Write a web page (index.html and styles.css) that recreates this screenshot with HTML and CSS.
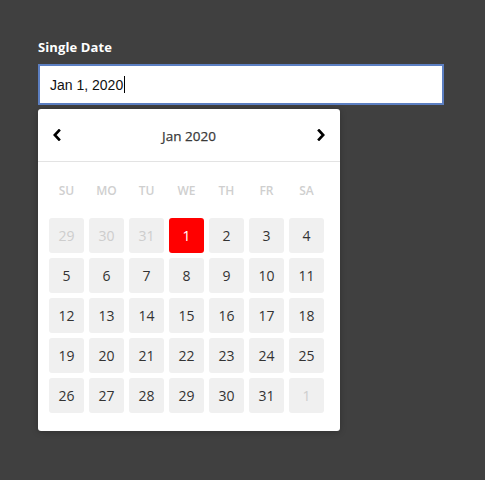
FILE: index.html
```html
<!DOCTYPE html>
<html>
<head>
<meta charset="utf-8">
<link rel="stylesheet" href="styles.css">
</head>
<body>
<div class="wrap">
  <div class="label">Single Date</div>
  <div class="input"><span class="val">Jan 1, 2020</span><span class="caret"></span></div>
  <div class="cal">
    <div class="head">
      <span class="nav">
        <svg width="10" height="12" viewBox="0 0 10 12"><path d="M7 1.5 L2.8 6 L7 10.5" fill="none" stroke="#000" stroke-width="2.6" stroke-linecap="square" stroke-linejoin="miter"/></svg>
      </span>
      <span class="title">Jan 2020</span>
      <span class="nav">
        <svg width="10" height="12" viewBox="0 0 10 12"><path d="M3 1.5 L7.2 6 L3 10.5" fill="none" stroke="#000" stroke-width="2.6" stroke-linecap="square" stroke-linejoin="miter"/></svg>
      </span>
    </div>
    <div class="grid">
      <div class="wd">SU</div><div class="wd">MO</div><div class="wd">TU</div><div class="wd">WE</div><div class="wd">TH</div><div class="wd">FR</div><div class="wd">SA</div>
      <div class="d off">29</div><div class="d off">30</div><div class="d off">31</div><div class="d sel">1</div><div class="d">2</div><div class="d">3</div><div class="d">4</div>
      <div class="d">5</div><div class="d">6</div><div class="d">7</div><div class="d">8</div><div class="d">9</div><div class="d">10</div><div class="d">11</div>
      <div class="d">12</div><div class="d">13</div><div class="d">14</div><div class="d">15</div><div class="d">16</div><div class="d">17</div><div class="d">18</div>
      <div class="d">19</div><div class="d">20</div><div class="d">21</div><div class="d">22</div><div class="d">23</div><div class="d">24</div><div class="d">25</div>
      <div class="d">26</div><div class="d">27</div><div class="d">28</div><div class="d">29</div><div class="d">30</div><div class="d">31</div><div class="d off">1</div>
    </div>
  </div>
</div>
</body>
</html>
```
FILE: styles.css
```css
html, body {
  margin: 0;
  padding: 0;
  background: #404040;
  height: 100%;
}
.wrap {
  padding: 38px 0 0 38px;
  font-family: "Open Sans", sans-serif;
}
.label {
  color: #fff;
  font-weight: bold;
  font-size: 13px;
  line-height: 18px;
  height: 18px;
  letter-spacing: 0.1px;
}
.input {
  margin-top: 8px;
  height: 37px;
  background: #fff;
  border: 2px solid #5c7fc2;
  display: flex;
  align-items: center;
  padding-left: 10px;
  box-sizing: content-box;
  width: 392px;
  font-family: "Liberation Sans", Arial, sans-serif;
  font-size: 14px;
  color: #111;
}
.caret {
  display: inline-block;
  width: 1px;
  height: 17px;
  background: #000;
  margin-left: 1px;
}
.cal {
  margin-top: 4px;
  width: 302px;
  height: 322px;
  background: #fff;
  border-radius: 3px;
  box-shadow: 0 1px 6px rgba(0,0,0,0.25);
  box-sizing: border-box;
}
.head {
  height: 53px;
  border-bottom: 1px solid #e3e3e3;
  display: flex;
  align-items: center;
  justify-content: space-between;
  padding: 0 14px 0 14px;
  box-sizing: border-box;
}
.nav {
  width: 10px;
  height: 12px;
  display: flex;
}
.title {
  font-size: 13.5px;
  font-weight: 400;
  color: #3a3a3a;
  -webkit-text-stroke: 0.25px #3a3a3a;
  padding-top: 2px;
}
.grid {
  display: grid;
  grid-template-columns: repeat(7, 35px);
  column-gap: 5px;
  row-gap: 5px;
  padding: 0 0 0 11px;
}
.wd {
  height: 51px;
  display: flex;
  align-items: center;
  justify-content: center;
  font-size: 12px;
  font-weight: 600;
  color: #cfcfcf;
  padding-top: 5px;
  box-sizing: border-box;
}
.d {
  height: 35px;
  background: #f0f0f0;
  border-radius: 3px;
  display: flex;
  align-items: center;
  justify-content: center;
  font-size: 14px;
  color: #333;
}
.d.off {
  color: #cdcdcd;
}
.d.sel {
  background: #ff0000;
  color: #fff;
}
```
